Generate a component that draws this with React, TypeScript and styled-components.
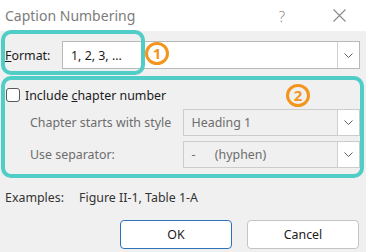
import React from "react";
import styled, { createGlobalStyle } from "styled-components";

const GlobalStyle = createGlobalStyle`
  html, body {
    margin: 0;
    padding: 0;
    background: #f0f0f0;
  }
  body {
    font-family: "Noto Sans", "Open Sans", sans-serif;
    font-size: 12.4px;
    color: #1b1b1b;
  }
  * { box-sizing: border-box; }
`;

const Dialog = styled.div`
  position: relative;
  width: 366px;
  height: 252px;
  background: #f0f0f0;
  overflow: hidden;
`;

const TitleBar = styled.div`
  height: 31px;
  background: #ffffff;
  display: flex;
  align-items: center;
  padding-left: 5px;
`;

const Title = styled.div`
  flex: 1;
  font-size: 14px;
  color: #7c7c7c;
`;

const TitleButton = styled.div<{ $w: number; $gap?: number }>`
  width: ${(p) => p.$w}px;
  margin-left: ${(p) => p.$gap ?? 0}px;
  height: 31px;
  display: flex;
  align-items: center;
  justify-content: center;
  color: #8a8a8a;
  font-size: 15px;
  font-weight: 300;
`;

const Row = styled.div<{ $top: number; $h: number; $pad?: number }>`
  display: flex;
  align-items: center;
  margin-top: ${(p) => p.$top}px;
  padding-left: ${(p) => p.$pad ?? 0}px;
  height: ${(p) => p.$h}px;
`;

const Label = styled.div<{ $w: number; $muted?: boolean; $indent?: number }>`
  width: ${(p) => p.$w}px;
  padding-left: ${(p) => p.$indent ?? 0}px;
  color: ${(p) => (p.$muted ? "#6d6d6d" : "#1b1b1b")};
  white-space: nowrap;
`;

const Select = styled.div<{ $disabled?: boolean; $w: number }>`
  width: ${(p) => p.$w}px;
  height: 100%;
  display: flex;
  align-items: stretch;
  background: ${(p) => (p.$disabled ? "#f0f0f0" : "#ffffff")};
  border: 1px solid ${(p) => (p.$disabled ? "#cccccc" : "#b9b9b9")};
`;

const SelectText = styled.div<{ $muted?: boolean }>`
  flex: 1;
  display: flex;
  align-items: center;
  padding-left: 8px;
  color: ${(p) => (p.$muted ? "#6d6d6d" : "#1b1b1b")};
  white-space: pre;
`;

const DropButton = styled.div`
  width: 22px;
  background: #ffffff;
  border-left: 1px solid #cfcfcf;
  display: flex;
  align-items: center;
  justify-content: center;
`;

const Section = styled.div`
  margin: 7px 0 0 1px;
  width: 363px;
  height: 102px;
  border: 4px solid #4fcdc6;
  border-radius: 10px;
  padding: 4px 0 0 1px;
`;

const CheckRow = styled.label`
  display: flex;
  align-items: center;
  height: 14px;
  gap: 5px;
`;

const CheckBox = styled.span`
  width: 14px;
  height: 14px;
  border: 1px solid #5a5a5a;
  border-radius: 3px;
  background: #ffffff;
`;

const Examples = styled.div`
  display: flex;
  align-items: center;
  height: 20px;
  margin-top: 9px;
  padding-left: 5px;
  color: #333333;
  gap: 15px;
`;

const Buttons = styled.div`
  display: flex;
  justify-content: flex-end;
  gap: 15px;
  margin-top: 13px;
  padding-right: 7px;
`;

const Button = styled.div<{ $primary?: boolean }>`
  width: 112px;
  height: 29px;
  display: flex;
  align-items: center;
  justify-content: center;
  background: #ffffff;
  border: 1px solid ${(p) => (p.$primary ? "#2f72b8" : "#c4c4c4")};
  border-radius: 4px;
  color: #1b1b1b;
`;

const Highlight = styled.div`
  position: absolute;
  left: 1px;
  top: 30px;
  width: 144px;
  height: 45px;
  border: 4px solid #4fcdc6;
  border-radius: 10px;
  pointer-events: none;
`;

const Badge = styled.div<{ $x: number; $y: number }>`
  position: absolute;
  left: ${(p) => p.$x}px;
  top: ${(p) => p.$y}px;
  width: 24px;
  height: 23px;
  border: 3px solid #f3951c;
  border-radius: 50%;
  color: #f3951c;
  font-weight: 700;
  font-size: 15px;
  line-height: 17px;
  text-align: center;
`;

const Chevron = () => (
  <svg width="9" height="5" viewBox="0 0 9 5">
    <path d="M0.5 0.5 L4.5 4.5 L8.5 0.5" fill="none" stroke="#606060" strokeWidth="1" />
  </svg>
);

const CloseIcon = () => (
  <svg width="13" height="13" viewBox="0 0 13 13">
    <path d="M0.5 0.5 L12.5 12.5 M12.5 0.5 L0.5 12.5" stroke="#8a8a8a" strokeWidth="1.1" />
  </svg>
);

export default function App() {
  return (
    <Dialog>
      <GlobalStyle />
      <TitleBar>
        <Title>Caption Numbering</Title>
        <TitleButton $w={22}>?</TitleButton>
        <TitleButton $w={26} $gap={33}>
          <CloseIcon />
        </TitleButton>
        <TitleButton $w={14} />
      </TitleBar>

      <Row $top={10} $h={28} $pad={5}>
        <Label $w={57}>
          <u>F</u>ormat:
        </Label>
        <Select $w={298}>
          <SelectText>1, 2, 3, ...</SelectText>
          <DropButton>
            <Chevron />
          </DropButton>
        </Select>
      </Row>

      <Section>
        <Row $top={4} $h={14}>
          <CheckRow>
            <CheckBox />
            <span>
              Include <u>c</u>hapter number
            </span>
          </CheckRow>
        </Row>
        <Row $top={7} $h={27}>
          <Label $w={177} $indent={24} $muted>
            Chapter starts with style
          </Label>
          <Select $w={178} $disabled>
            <SelectText $muted>Heading 1</SelectText>
            <DropButton>
              <Chevron />
            </DropButton>
          </Select>
        </Row>
        <Row $top={5} $h={27}>
          <Label $w={177} $indent={24} $muted>
            Use separator:
          </Label>
          <Select $w={178} $disabled>
            <SelectText $muted>{"-      (hyphen)"}</SelectText>
            <DropButton>
              <Chevron />
            </DropButton>
          </Select>
        </Row>
      </Section>

      <Examples>
        <span>Examples:</span>
        <span>Figure II-1, Table 1-A</span>
      </Examples>

      <Buttons>
        <Button $primary>OK</Button>
        <Button>Cancel</Button>
      </Buttons>

      <Highlight />
      <Badge $x={145} $y={42}>1</Badge>
      <Badge $x={286} $y={84}>2</Badge>
    </Dialog>
  );
}
